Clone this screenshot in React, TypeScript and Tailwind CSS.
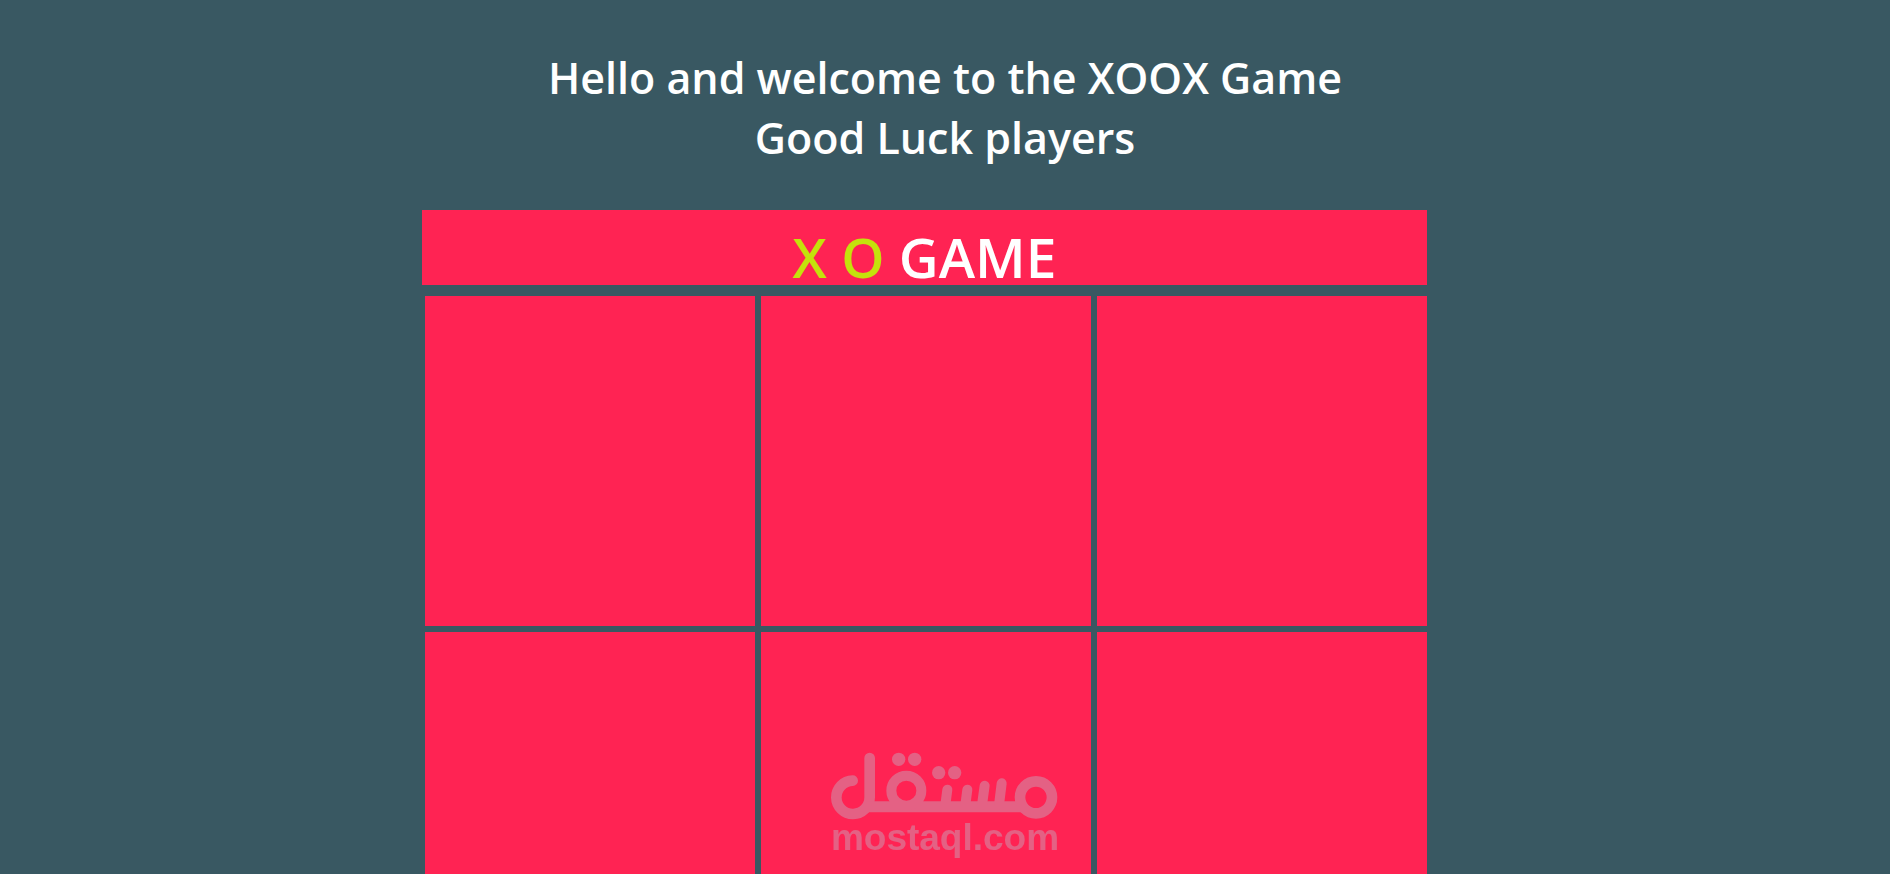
import React, { useState } from 'react';

type Mark = 'X' | 'O' | '';

const emptyBoard: Mark[] = Array(9).fill('');

const Welcome: React.FC = () => (
  <h1 className="text-center text-[43px] leading-[60px] font-semibold text-white">
    Hello and welcome to the XOOX Game
    <br />
    Good Luck players
  </h1>
);

const Banner: React.FC = () => (
  <h2 className="bg-[#ff2353] pt-[19px] text-center text-[55px] leading-[56px] font-semibold text-white">
    <span className="text-[#c4e20c]">X O</span> GAME
  </h2>
);

interface CellProps {
  mark: Mark;
  index: number;
  onPlay: (index: number) => void;
}

const Cell: React.FC<CellProps> = ({ mark, index, onPlay }) => (
  <button
    type="button"
    aria-label={`Cell ${index + 1}`}
    onClick={() => onPlay(index)}
    className="aspect-square cursor-pointer bg-[#ff2353] text-9xl font-semibold text-white"
  >
    {mark}
  </button>
);

const Watermark: React.FC = () => (
  <div className="pointer-events-none fixed inset-x-0 bottom-[18px] flex flex-col items-center text-[#a5f0f5] opacity-30">
    <svg width="230" height="70" viewBox="30 30 690 210" fill="none" stroke="currentColor" strokeLinecap="round" aria-hidden="true">
      <path d="M98 122A50 50 0 1 0 149 172V54" strokeWidth="32" />
      <path d="M140 200H615" strokeWidth="33" strokeLinecap="butt" />
      <circle cx="259" cy="152" r="45" strokeWidth="30" />
      <circle cx="648" cy="172" r="48" strokeWidth="32" />
      <path d="M382 149L376 195M442 149L436 195M494 137L486 195M545 130L537 195" strokeWidth="30" />
      <g fill="currentColor" stroke="none">
        <circle cx="236" cy="58" r="20" />
        <circle cx="284" cy="58" r="20" />
        <circle cx="356" cy="98" r="20" />
        <circle cx="404" cy="98" r="20" />
      </g>
    </svg>
    <span className="font-['Liberation_Sans',Arial,sans-serif] text-[37px] leading-[36px] font-bold">mostaql.com</span>
  </div>
);

const App: React.FC = () => {
  const [board, setBoard] = useState<Mark[]>(emptyBoard);

  const play = (index: number) => {
    if (board[index]) return;
    const turn: Mark = board.filter(Boolean).length % 2 === 0 ? 'X' : 'O';
    setBoard(board.map((mark, i) => (i === index ? turn : mark)));
  };

  return (
    <div className="min-h-screen bg-[#395862] pt-12 pb-10 font-['Open_Sans','Noto_Sans',sans-serif]">
      <Welcome />
      <main className="mt-[42px] flex justify-center pr-[41px]">
        <div className="w-full max-w-[1005px]">
          <Banner />
          <div className="mt-[11px] grid grid-cols-3 gap-[6px] pl-[3px]">
            {board.map((mark, index) => (
              <Cell key={index} mark={mark} index={index} onPlay={play} />
            ))}
          </div>
        </div>
      </main>
      <Watermark />
    </div>
  );
};

export default App;
